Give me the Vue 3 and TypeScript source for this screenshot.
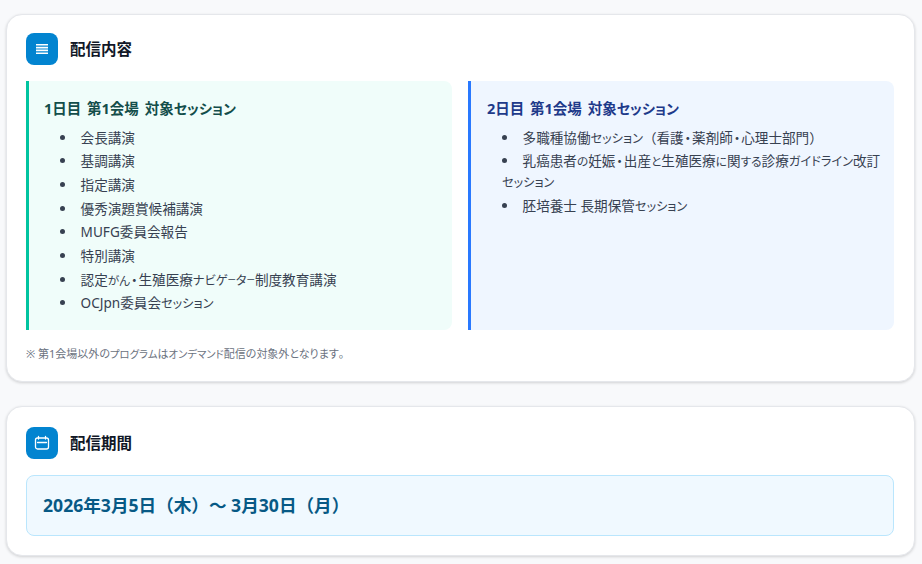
<script setup lang="ts">
interface Part { text: string; kind: string }

// Kana is set smaller than kanji, so each string is split into runs by script.
function split(s: string): Part[] {
  const runs = s.match(/[ァ-ヶ]+|ー|・|[ぁ-ん]+|[^ァ-ヶー・ぁ-ん]+/g) ?? []
  return runs.map((text) => ({
    text,
    kind: text === '・' ? 'dot' : text === 'ー' ? 'bar' : /^[ァ-ヶ]/.test(text) ? 'kata' : /^[ぁ-ん]/.test(text) ? 'hira' : 'other',
  }))
}

const day1 = ['会長講演','基調講演','指定講演','優秀演題賞候補講演','MUFG委員会報告','特別講演','認定がん・生殖医療ナビゲーター制度教育講演','OCJpn委員会セッション'].map(split)
const day2 = ['多職種協働セッション（看護・薬剤師・心理士部門）','乳癌患者の妊娠・出産と生殖医療に関する診療ガイドライン改訂セッション','胚培養士 長期保管セッション'].map(split)
const note = split('※ 第1会場以外のプログラムはオンデマンド配信の対象外となります。')
const h1 = split('1日目 第1会場 対象セッション')
const h2 = split('2日目 第1会場 対象セッション')
</script>

<template>
  <main class="page">
    <section class="card">
      <header class="head">
        <span class="icon">
          <svg width="12" height="10" viewBox="0 0 12 10" fill="none" stroke="#fff" stroke-width="1.6">
            <path d="M0 0.75H12M0 3.58H12M0 6.42H12M0 9.25H12" />
          </svg>
        </span>
        <h2>配信内容</h2>
      </header>
      <div class="grid">
        <div class="panel green">
          <h3><span v-for="(p, i) in h1" :key="i" :class="p.kind">{{ p.text }}</span></h3>
          <ul>
            <li v-for="(item, n) in day1" :key="n"><span class="lead"></span><span v-for="(p, i) in item" :key="i" :class="p.kind">{{ p.text }}</span></li>
          </ul>
        </div>
        <div class="panel blue">
          <h3><span v-for="(p, i) in h2" :key="i" :class="p.kind">{{ p.text }}</span></h3>
          <ul>
            <li v-for="(item, n) in day2" :key="n"><span class="lead"></span><span v-for="(p, i) in item" :key="i" :class="p.kind">{{ p.text }}</span></li>
          </ul>
        </div>
      </div>
      <p class="note"><span v-for="(p, i) in note" :key="i" :class="p.kind">{{ p.text }}</span></p>
    </section>
    <section class="card second">
      <header class="head">
        <span class="icon">
          <svg width="16" height="16" viewBox="0 0 16 16" fill="none" stroke="#fff" stroke-width="1.3" stroke-linecap="round" stroke-linejoin="round">
            <rect x="1.5" y="3" width="13" height="11" rx="2" />
            <path d="M3.5 7.5H12.5M4.5 1.5V4M11.5 1.5V4" />
          </svg>
        </span>
        <h2>配信期間</h2>
      </header>
      <div class="period">2026年3月5日（木）〜 3月30日（月）</div>
    </section>
  </main>
</template>

<style>
body { background: #f8f9fb; }
</style>

<style scoped>
.page {
  padding: 14px 7px 8px 6px;
  font-family: "Noto Sans", "Noto Sans CJK JP", sans-serif;
}
.card {
  background: #fff;
  border: 1px solid #e5e7eb;
  border-radius: 16px;
  box-shadow: 0 1px 3px rgba(0, 0, 0, 0.16);
  padding: 18px 20px 19.5px 19px;
}
.second { margin-top: 23.5px; padding-top: 20px; padding-bottom: 19px; }
.head { display: flex; align-items: center; gap: 12px; height: 32px; margin-bottom: 16px; }
.icon {
  width: 32px; height: 32px; border-radius: 8px; background: #0284d0;
  display: flex; align-items: center; justify-content: center;
}
h2 { margin: 0; font-size: 15.5px; line-height: 30px; font-weight: 700; color: #111827; }
.grid { display: grid; grid-template-columns: 1fr 1fr; gap: 16px; }
.panel { border-radius: 0 8px 8px 0; border-left: 3px solid; padding: 16px 13px 13.6px 15px; }
.green { background: #f0fdfa; border-color: #00c4a0; }
.blue { background: #eff6ff; border-color: #2979ff; }
h3 { margin: 0 0 7.5px; font-size: 14.5px; line-height: 22px; font-weight: 700; word-spacing: 2px; }
.green h3 { color: #134e4a; }
.blue h3 { color: #1e3a8a; margin-left: 1px; }
h3 .kata { font-feature-settings: "palt"; font-size: 14px; line-height: 1; }
ul { margin: 0; padding: 0 0 0 16px; list-style: inside disc; }
li { font-size: 13.6px; line-height: 21px; margin-bottom: 2.7px; color: #374151; }
.lead { margin-left: 1px; }
li .kata { font-feature-settings: "palt"; font-size: 12.2px; line-height: 1; }
li .hira { font-feature-settings: "palt"; font-size: 11.7px; line-height: 1; }
li .dot { font-feature-settings: "palt"; margin: 0 0.8px; }
li .bar { font-feature-settings: "palt"; font-size: 8.5px; line-height: 1; vertical-align: 1.8px; }
.note { margin: 16px 0 0; font-size: 11px; line-height: 16px; color: #6b7280; }
.note .kata { font-feature-settings: "palt"; font-size: 10.4px; line-height: 1; }
.note .hira { font-feature-settings: "palt"; line-height: 1; }
.period {
  background: #f0f9ff; border: 1px solid #bae6fd; border-radius: 8px;
  padding: 16.5px 16px; font-size: 17.6px; line-height: 26px; font-weight: 700; color: #075985;
}
</style>
